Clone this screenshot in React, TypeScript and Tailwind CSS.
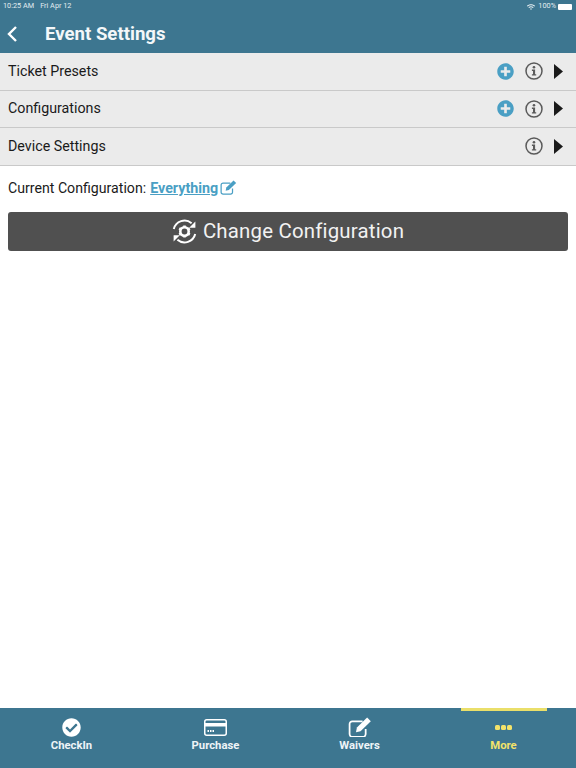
import { ReactNode } from "react";
import { FaCheckCircle, FaPlusCircle, FaWifi } from "react-icons/fa";

function InfoIcon() {
  return (
    <svg width="18" height="18" viewBox="0 0 18 18" className="block">
      <circle cx="9" cy="9" r="8" fill="none" stroke="#5a5a5a" strokeWidth="1.5" />
      <circle cx="9" cy="5.2" r="1.3" fill="#5a5a5a" />
      <path d="M6.9 7.6h3.2v4.6h1.1v1.4H6.9v-1.4H8v-3.2H6.9z" fill="#5a5a5a" />
    </svg>
  );
}

function Caret() {
  return (
    <svg width="9" height="15" viewBox="0 0 9 15" className="block">
      <path d="M0 0L9 7.5L0 15Z" fill="#1a1a1a" />
    </svg>
  );
}

function SyncCog() {
  return (
    <svg width="25" height="25" viewBox="0 0 25 25" className="block" fill="none" stroke="#fff">
      <path d="M1.8 10A11 11 0 0 1 19.6 4.2" strokeWidth="2" />
      <path d="M23.2 15A11 11 0 0 1 5.4 20.8" strokeWidth="2" />
      <path d="M23.4 2.6V8.8H17.2Z" fill="#fff" stroke="none" />
      <path d="M1.6 22.4V16.2H7.8Z" fill="#fff" stroke="none" />
      <circle cx="12.5" cy="12.5" r="4.2" strokeWidth="2.6" />
      <path
        d="M12.5 6.4v2M12.5 16.6v2M7.2 9.45l1.7 1M16.1 14.55l1.7 1M7.2 15.55l1.7-1M16.1 10.45l1.7-1"
        strokeWidth="2.6"
      />
    </svg>
  );
}

function CardIcon() {
  return (
    <svg width="23" height="17" viewBox="0 0 23 17" className="block">
      <rect x="0.75" y="0.75" width="21.5" height="15.5" rx="2" fill="none" stroke="#fff" strokeWidth="1.5" />
      <rect x="1" y="4" width="21" height="3.5" fill="#fff" />
      <path d="M3.5 11h1.5v2H3.5zM6 11h1.5v2H6zM8.5 11H10v2H8.5z" fill="#fff" />
    </svg>
  );
}

function EditIcon({ size, color }: { size: number; color: string }) {
  return (
    <svg width={size} height={size * 0.86} viewBox="0 0 23 20" className="block">
      <path
        d="M14 4.2H4a2.6 2.6 0 0 0-2.6 2.6v9.8A2.6 2.6 0 0 0 4 19.2h10.4a2.6 2.6 0 0 0 2.6-2.6v-5"
        fill="none"
        stroke={color}
        strokeWidth="1.7"
      />
      <path d="M18.4 0.6L22 4.1L12 13.8L7.6 14.8L8.5 10.3Z" fill={color} />
    </svg>
  );
}

function MoreDots() {
  return (
    <div className="flex items-center gap-[1px]">
      <span className="h-[5px] w-[5px] rounded-[1.5px] bg-[#f3e36a]" />
      <span className="h-[5px] w-[5px] rounded-[1.5px] bg-[#f3e36a]" />
      <span className="h-[5px] w-[5px] rounded-[1.5px] bg-[#f3e36a]" />
    </div>
  );
}

function Row({ title, add }: { title: string; add?: boolean }) {
  return (
    <div className="flex h-[37.5px] items-center border-b border-[#c9c9c9] bg-[#ebebeb] pl-2 pr-[13px]">
      <span className="flex-1 text-[14.25px] text-[#1a1a1a]">{title}</span>
      {add && <FaPlusCircle className="mr-[11px] text-[17px] text-[#4a9fc4]" />}
      <InfoIcon />
      <div className="ml-[11px]">
        <Caret />
      </div>
    </div>
  );
}

function Tab({ icon, label, active }: { icon: ReactNode; label: string; active?: boolean }) {
  return (
    <div className="flex w-1/4 flex-col items-center pr-[1px]">
      <div className={active ? "h-[3px] w-[86px] bg-[#eadf6a]" : "h-[3px] w-[86px]"} />
      <div className="mt-[5px] flex h-[22px] items-center justify-center">{icon}</div>
      <span
        className={
          active
            ? "mt-[1px] text-[11.3px] font-bold leading-[14px] text-[#f3e36a]"
            : "mt-[1px] text-[11.3px] font-bold leading-[14px] text-[#eef4f7]"
        }
      >
        {label}
      </span>
    </div>
  );
}

export default function App() {
  return (
    <div className="flex h-[768px] w-[576px] flex-col overflow-hidden bg-white font-['Roboto',sans-serif]">
      <header className="h-[53px] shrink-0 bg-[#3d7690] text-white">
        <div className="flex h-[12px] items-center justify-between pl-[3px] pr-[4px] pt-[1px] text-[7.3px]">
          <div className="flex gap-[6px] text-[#e3edf1]">
            <span>10:25 AM</span>
            <span>Fri Apr 12</span>
          </div>
          <div className="flex items-center text-[#e3edf1]">
            <FaWifi className="mr-[3px] text-[8px]" />
            <span className="mr-[2px]">100%</span>
            <div className="h-[6px] w-[14px] rounded-[1px] bg-white" />
          </div>
        </div>
        <div className="mt-[3px] flex items-center pl-[6px]">
          <svg width="12" height="18" viewBox="0 0 12 18" className="block" fill="none">
            <path d="M10 2L3 9L10 16" stroke="#fff" strokeWidth="2.4" />
          </svg>
          <h1 className="ml-[27px] text-[18.6px] font-bold leading-[38px] text-[#f3f7f9]">Event Settings</h1>
        </div>
      </header>

      <Row title="Ticket Presets" add />
      <Row title="Configurations" add />
      <Row title="Device Settings" />

      <div className="mt-[12px] flex items-center px-2 text-[14.15px] leading-[20px] text-[#1a1a1a]">
        <span>Current Configuration:</span>
        <span className="ml-1 text-[14.3px] font-bold text-[#4a9fc4] underline">Everything</span>
        <div className="ml-[2px]">
          <EditIcon size={17} color="#4a9fc4" />
        </div>
      </div>

      <button className="mx-2 mt-[14px] flex h-[39px] items-center justify-center rounded-[3px] bg-[#505050] text-[20.4px] text-[#f2f2f2]">
        <SyncCog />
        <span className="ml-[6px] tracking-[0.2px]">Change Configuration</span>
      </button>

      <div className="flex-1" />

      <nav className="flex h-[60px] shrink-0 bg-[#3d7690]">
        <Tab icon={<FaCheckCircle className="text-[19px] text-white" />} label="CheckIn" />
        <Tab icon={<CardIcon />} label="Purchase" />
        <Tab icon={<EditIcon size={24} color="#ffffff" />} label="Waivers" />
        <Tab icon={<MoreDots />} label="More" active />
      </nav>
    </div>
  );
}
